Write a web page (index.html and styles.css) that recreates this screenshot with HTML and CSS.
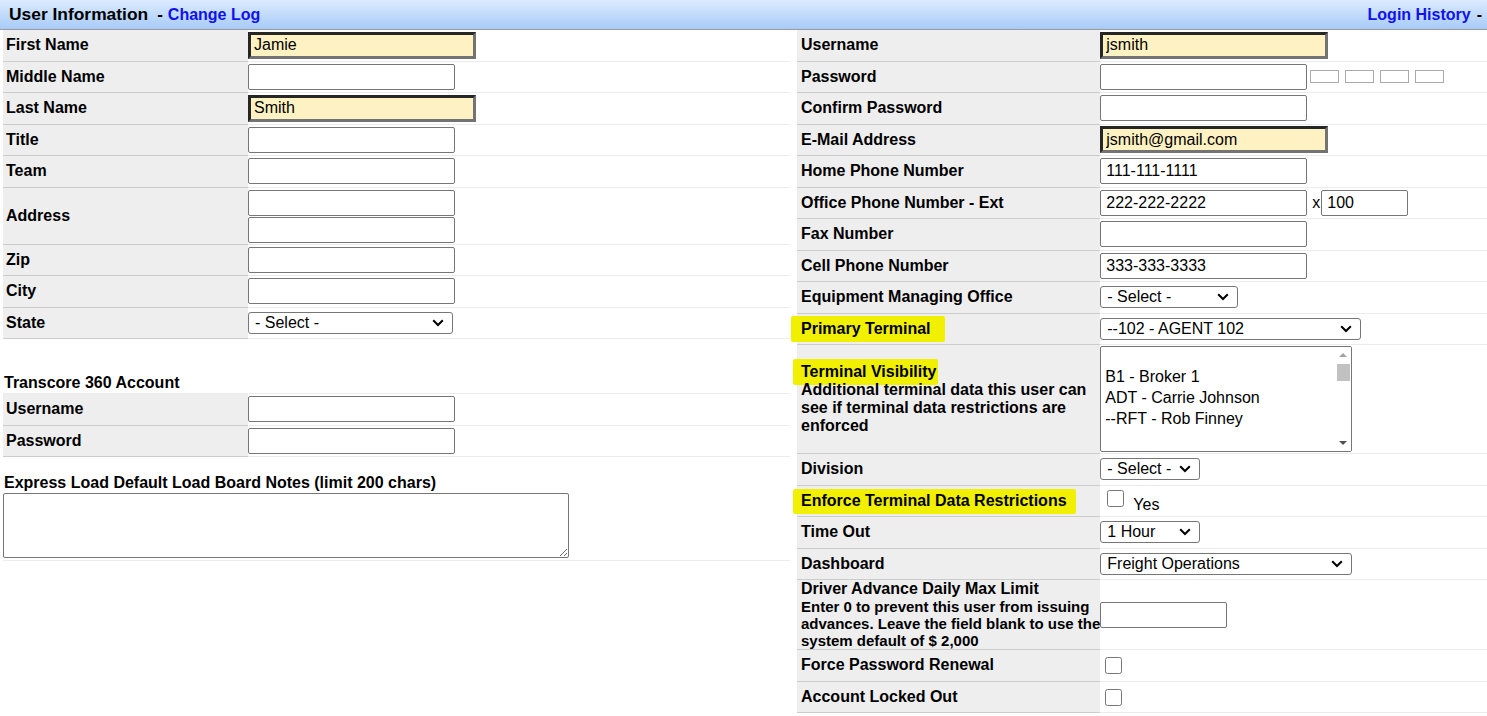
FILE: index.html
```html
<!DOCTYPE html>
<html lang="en">
<head>
<meta charset="utf-8">
<title>User Information</title>
<link rel="stylesheet" href="styles.css">
</head>
<body>
<div class="titlebar">
  <div class="title"><span class="main-title">User Information</span><span class="dash">-</span><a class="link" href="#">Change Log</a></div>
  <div class="title"><a class="link" href="#">Login History</a><span class="dash dash-end">-</span></div>
</div>
<div class="columns">
  <div class="col">
    <table class="form left">
      <tr><td class="lbl">First Name</td><td class="fld"><input class="txt req" type="text" value="Jamie"></td></tr>
      <tr><td class="lbl">Middle Name</td><td class="fld"><input class="txt" type="text"></td></tr>
      <tr><td class="lbl">Last Name</td><td class="fld"><input class="txt req" type="text" value="Smith"></td></tr>
      <tr><td class="lbl">Title</td><td class="fld"><input class="txt" type="text"></td></tr>
      <tr><td class="lbl">Team</td><td class="fld"><input class="txt" type="text"></td></tr>
      <tr><td class="lbl">Address</td><td class="fld"><div class="stack"><input class="txt" type="text"><input class="txt" type="text"></div></td></tr>
      <tr><td class="lbl">Zip</td><td class="fld"><input class="txt" type="text"></td></tr>
      <tr><td class="lbl">City</td><td class="fld"><input class="txt" type="text"></td></tr>
      <tr><td class="lbl">State</td><td class="fld"><span class="selwrap"><select class="sel w-state"><option>- Select -</option></select><svg class="chev" viewBox="0 0 12 8"><polyline points="1.2,1.2 6,6 10.8,1.2"/></svg></span></td></tr>
    </table>

    <div class="section-title transcore">Transcore 360 Account</div>
    <table class="form left top-line">
      <tr><td class="lbl">Username</td><td class="fld"><input class="txt" type="text"></td></tr>
      <tr><td class="lbl">Password</td><td class="fld"><input class="txt" type="password"></td></tr>
    </table>

    <div class="section-title notes-title">Express Load Default Load Board Notes (limit 200 chars)</div>
    <div class="notes-row"><textarea class="notes"></textarea></div>
  </div>

  <div class="col">
    <table class="form right">
      <tr><td class="lbl">Username</td><td class="fld"><input class="txt req" type="text" value="jsmith"></td></tr>
      <tr><td class="lbl">Password</td><td class="fld"><input class="txt" type="password"><span class="strength"><span class="sbox"></span><span class="sbox"></span><span class="sbox"></span><span class="sbox"></span></span></td></tr>
      <tr><td class="lbl">Confirm Password</td><td class="fld"><input class="txt" type="password"></td></tr>
      <tr><td class="lbl">E-Mail Address</td><td class="fld"><input class="txt req" type="text" value="jsmith@gmail.com"></td></tr>
      <tr><td class="lbl">Home Phone Number</td><td class="fld"><input class="txt" type="text" value="111-111-1111"></td></tr>
      <tr><td class="lbl">Office Phone Number - Ext</td><td class="fld"><input class="txt" type="text" value="222-222-2222"><span class="ext-x">x</span><input class="txt w-ext" type="text" value="100"></td></tr>
      <tr><td class="lbl">Fax Number</td><td class="fld"><input class="txt" type="text"></td></tr>
      <tr><td class="lbl">Cell Phone Number</td><td class="fld"><input class="txt" type="text" value="333-333-3333"></td></tr>
      <tr><td class="lbl">Equipment Managing Office</td><td class="fld"><span class="selwrap"><select class="sel w-equip"><option>- Select -</option></select><svg class="chev" viewBox="0 0 12 8"><polyline points="1.2,1.2 6,6 10.8,1.2"/></svg></span></td></tr>
      <tr><td class="lbl"><span class="hl hl-primary">Primary Terminal</span></td><td class="fld"><span class="selwrap"><select class="sel w-primary"><option>--102 - AGENT 102</option></select><svg class="chev" viewBox="0 0 12 8"><polyline points="1.2,1.2 6,6 10.8,1.2"/></svg></span></td></tr>
      <tr>
        <td class="lbl multi"><span class="hl hl-tv">Terminal Visibility</span><span class="desc">Additional terminal data this user can<br>see if terminal data restrictions are<br>enforced</span></td>
        <td class="fld lbcell">
          <div class="listbox">
            <div class="opts">
              <div class="opt blank"></div>
              <div class="opt">B1 - Broker 1</div>
              <div class="opt">ADT - Carrie Johnson</div>
              <div class="opt">--RFT - Rob Finney</div>
            </div>
            <div class="sbar">
              <div class="sarrow"><span class="tri-up"></span></div>
              <div class="thumb"></div>
              <div class="sfill"></div>
              <div class="sarrow"><span class="tri-down"></span></div>
            </div>
          </div>
        </td>
      </tr>
      <tr><td class="lbl">Division</td><td class="fld"><span class="selwrap"><select class="sel w-div"><option>- Select -</option></select><svg class="chev" viewBox="0 0 12 8"><polyline points="1.2,1.2 6,6 10.8,1.2"/></svg></span></td></tr>
      <tr><td class="lbl"><span class="hl hl-enf">Enforce Terminal Data Restrictions</span></td><td class="fld"><input class="chk chk-yes" type="checkbox"><span class="yes">Yes</span></td></tr>
      <tr><td class="lbl">Time Out</td><td class="fld"><span class="selwrap"><select class="sel w-div"><option>1 Hour</option></select><svg class="chev" viewBox="0 0 12 8"><polyline points="1.2,1.2 6,6 10.8,1.2"/></svg></span></td></tr>
      <tr><td class="lbl">Dashboard</td><td class="fld"><span class="selwrap"><select class="sel w-dash"><option>Freight Operations</option></select><svg class="chev" viewBox="0 0 12 8"><polyline points="1.2,1.2 6,6 10.8,1.2"/></svg></span></td></tr>
      <tr><td class="lbl">Driver Advance Daily Max Limit<span class="desc small">Enter 0 to prevent this user from issuing<br>advances. Leave the field blank to use the<br>system default of $ 2,000</span></td><td class="fld"><input class="txt w-adv" type="text"></td></tr>
      <tr><td class="lbl">Force Password Renewal</td><td class="fld"><input class="chk" type="checkbox"></td></tr>
      <tr><td class="lbl">Account Locked Out</td><td class="fld"><input class="chk" type="checkbox"></td></tr>
    </table>
  </div>
</div>
</body>
</html>
```
FILE: styles.css
```css
html, body {
  margin: 0;
  padding: 0;
  background: #fff;
}
body {
  font-family: "Liberation Sans", Arial, sans-serif;
  font-size: 16px;
  color: #000;
}

.titlebar {
  display: flex;
  justify-content: space-between;
  align-items: center;
  height: 29px;
  padding: 0 5px 0 9px;
  background: linear-gradient(#dcebfe, #a7cbf8);
  border-bottom: 1px solid #9c9c9c;
  font-weight: bold;
  font-size: 16px;
  line-height: 18px;
}
.title {
  white-space: nowrap;
}
.main-title {
  font-size: 17.4px;
}
.dash {
  font-size: 17px;
  margin: 0 5px 0 9px;
}
.dash-end {
  font-size: 16px;
  margin: 0 0 0 6px;
}
.link {
  color: #1010f0;
  text-decoration: none;
}

.columns {
  display: grid;
  grid-template-columns: 787px 690px;
  column-gap: 7px;
  padding-left: 3px;
  align-items: start;
}

table.form {
  width: 100%;
  border-collapse: collapse;
  border-spacing: 0;
}
table.form td {
  padding: 0;
  height: 30.5px;
  vertical-align: middle;
  line-height: 18px;
}
table.form td.lbl {
  background: #eeeeee;
  border-bottom: 1px solid #cccccc;
  font-weight: bold;
  white-space: nowrap;
  box-sizing: border-box;
}
table.form td.fld {
  border-bottom: 1px solid #ececec;
  white-space: nowrap;
}
table.left td.lbl {
  width: 245px;
  padding-left: 3px;
}
table.right td.lbl {
  width: 303px;
  padding-left: 4px;
}
table.form td.lbcell {
  padding: 1px 0;
}
table.top-line {
  border-top: 1px solid #ececec;
}

.section-title {
  font-weight: bold;
  line-height: 18px;
  padding-left: 1px;
}
.transcore {
  margin-top: 35px;
  padding-bottom: 1px;
}
.notes-title {
  margin-top: 17px;
  padding-bottom: 1px;
}
.notes-row {
  border-bottom: 1px solid #ececec;
  padding-bottom: 2px;
}
.notes {
  display: block;
  box-sizing: border-box;
  width: 566px;
  height: 65px;
  margin: 0;
  border: 1px solid #767676;
  border-radius: 2px;
  font: 13px "Liberation Mono", monospace;
}

/* text inputs */
.txt {
  box-sizing: border-box;
  width: 207px;
  height: 26px;
  margin: 0;
  padding: 0 5px;
  border: 1px solid #767676;
  border-radius: 2px;
  background: #fff;
  color: #000;
  font: 16px "Liberation Sans", Arial, sans-serif;
  vertical-align: middle;
}
.txt.req {
  width: 228px;
  height: 27px;
  padding: 0 3px;
  border-width: 3px;
  border-style: solid;
  border-color: #262626 #737373 #737373 #262626;
  border-radius: 0;
  background: #fff2c2;
}
.w-ext { width: 87px; }
.w-adv { width: 127px; }

.stack {
  display: flex;
  flex-direction: column;
  gap: 1px;
  padding: 2px 0 1px;
}

.ext-x {
  margin: 0 1px 0 5px;
  vertical-align: middle;
}

.strength {
  display: inline-flex;
  gap: 6px;
  margin-left: 3px;
  vertical-align: middle;
}
.sbox {
  box-sizing: border-box;
  width: 29px;
  height: 13px;
  border: 1px solid #aaaaaa;
}

/* selects */
.selwrap {
  position: relative;
  display: inline-block;
  vertical-align: middle;
  line-height: 0;
}
.sel {
  -webkit-appearance: none;
  appearance: none;
  box-sizing: border-box;
  height: 22px;
  margin: 0;
  padding: 0 24px 0 6px;
  border: 1px solid #767676;
  border-radius: 3px;
  background: #fff;
  color: #000;
  font: 16px "Liberation Sans", Arial, sans-serif;
  line-height: 20px;
}
.chev {
  position: absolute;
  right: 9px;
  top: 50%;
  width: 12px;
  height: 8px;
  margin-top: -4px;
  pointer-events: none;
  fill: none;
  stroke: #000;
  stroke-width: 2;
}
.w-state { width: 205px; }
.w-equip { width: 138px; }
.w-primary { width: 261px; }
.w-div { width: 100px; }
.w-dash { width: 252px; }

/* multi-select list */
.listbox {
  box-sizing: border-box;
  display: flex;
  width: 252px;
  height: 106px;
  border: 1px solid #767676;
  border-radius: 2px;
  background: #fff;
  overflow: hidden;
}
.opts {
  flex: 1;
  padding-left: 4px;
  overflow: hidden;
}
.opt {
  height: 21px;
  line-height: 21px;
  white-space: nowrap;
}
.opt.blank {
  height: 19px;
}
.sbar {
  width: 16px;
  display: flex;
  flex-direction: column;
  align-items: center;
  background: #fff;
}
.sarrow {
  height: 16px;
  width: 16px;
  display: flex;
  align-items: center;
  justify-content: center;
}
.tri-up {
  width: 0;
  height: 0;
  border-left: 4px solid transparent;
  border-right: 4px solid transparent;
  border-bottom: 4px solid #a3a3a3;
}
.tri-down {
  width: 0;
  height: 0;
  border-left: 4px solid transparent;
  border-right: 4px solid transparent;
  border-top: 4px solid #505050;
}
.thumb {
  width: 13px;
  height: 17px;
  margin-top: 1px;
  background: #c1c1c1;
}
.sfill {
  flex: 1;
}

/* checkboxes */
.chk {
  width: 17px;
  height: 17px;
  margin: 0 0 0 5px;
  vertical-align: middle;
}
.chk-yes {
  margin: 0 9px 0 7px;
  vertical-align: -5px;
}
.yes {
  vertical-align: -8px;
}

/* label text */
.desc {
  display: block;
  font-size: 16px;
  line-height: 18px;
}
.desc.small {
  font-size: 15px;
  line-height: 17px;
}
.multi {
  line-height: 18px;
}

/* marker highlights */
.hl {
  background: #f0f000;
  border-radius: 2px;
}
.hl-primary {
  padding: 4px 14px 5px 10px;
  margin: 0 -14px 0 -10px;
}
.hl-tv {
  padding: 4px 2px 5px 8px;
  margin: 0 -2px 0 -8px;
}
.hl-enf {
  padding: 3px 9px 5px 8px;
  margin: 0 -9px 0 -8px;
}
```
